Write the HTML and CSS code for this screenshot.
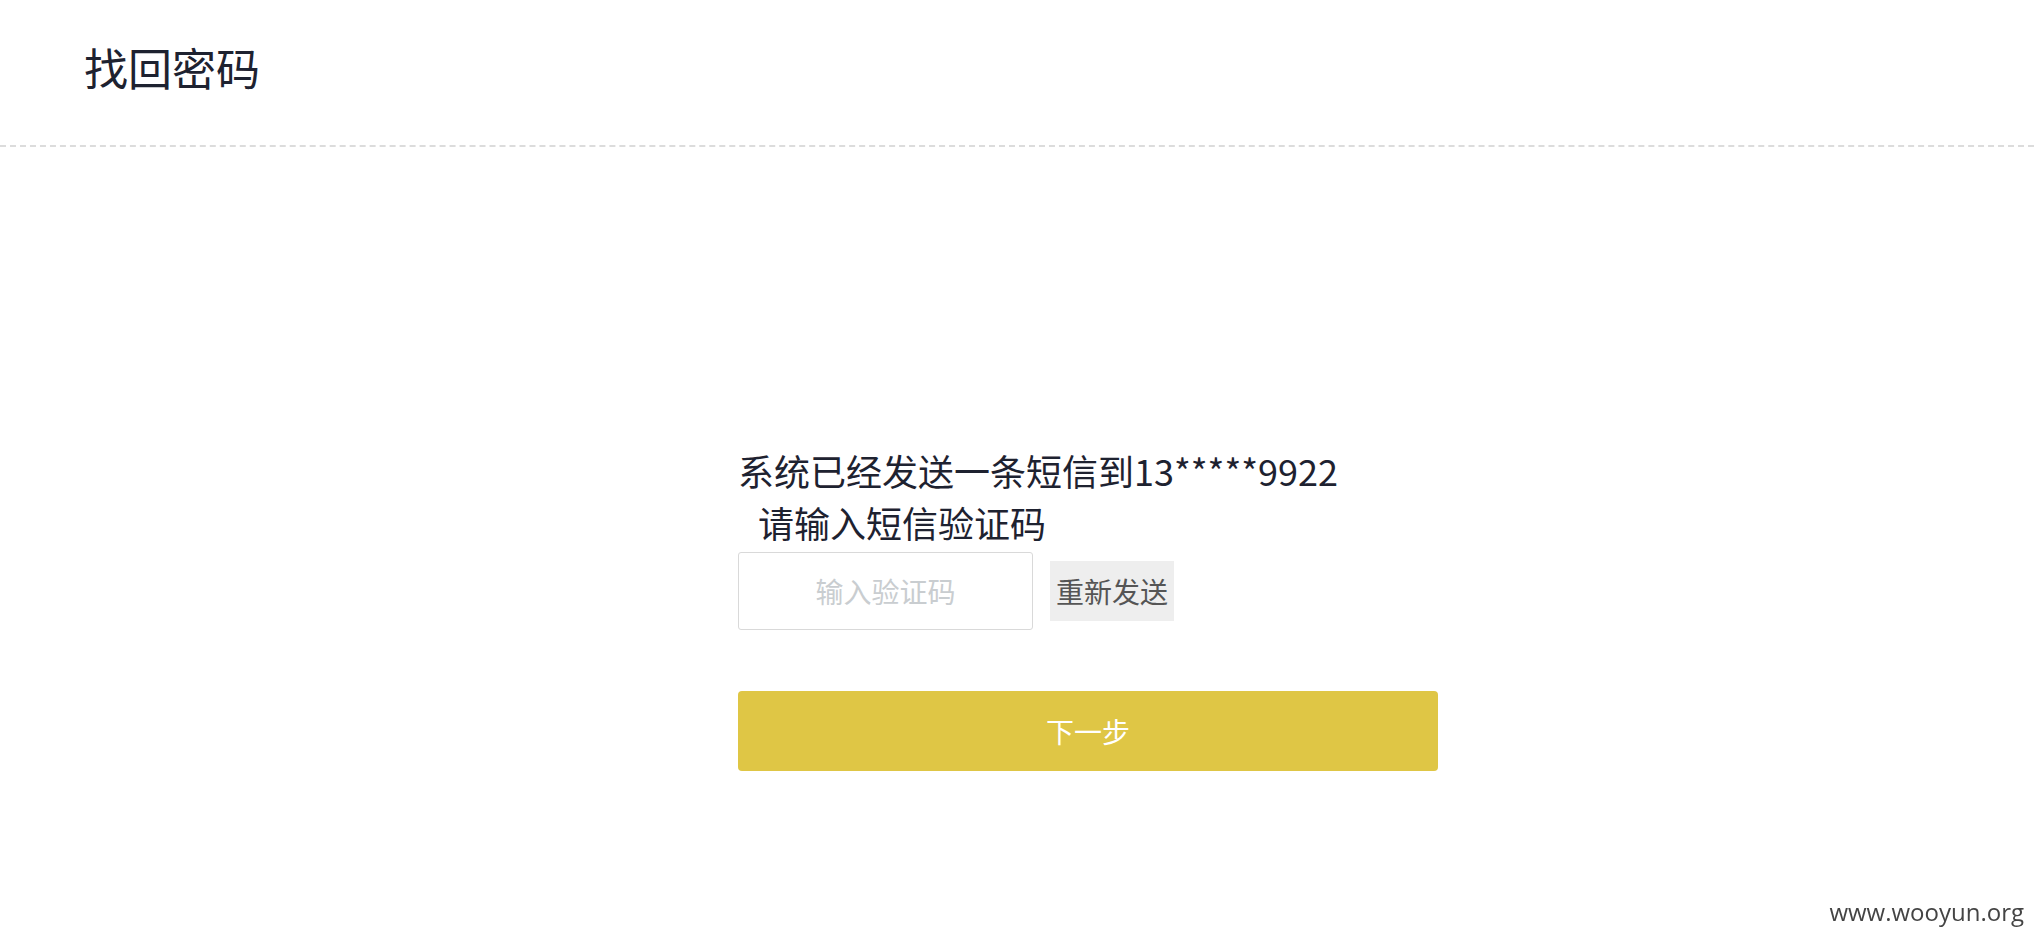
FILE: index.html
```html
<!DOCTYPE html>
<html lang="zh-CN">
<head>
<meta charset="UTF-8">
<meta name="viewport" content="width=device-width, initial-scale=1.0">
<title>找回密码</title>
<link rel="stylesheet" href="styles.css">
</head>
<body>
<div class="header">
    <h1>找回密码</h1>
</div>
<div class="panel">
    <p class="tip">系统已经发送一条短信到13*****9922</p>
    <p class="tip indent">请输入短信验证码</p>
    <div class="code-row">
        <input type="text" class="code-input" placeholder="输入验证码">
        <button class="resend">重新发送</button>
    </div>
    <button class="next">下一步</button>
</div>
<div class="watermark">www.wooyun.org</div>
</body>
</html>
```

FILE: styles.css
```css
body {
    margin: 0;
    padding: 0;
    background-color: #fff;
    font-family: "Noto Sans CJK SC", "Noto Sans", sans-serif;
    color: #1e2230;
}
.header {
    height: 147px;
    padding-left: 84px;
    box-sizing: border-box;
    border-bottom: 2px dashed #dcdcdc;
}
.header h1 {
    margin: 0;
    padding-top: 42px;
    font-size: 44px;
    font-weight: normal;
    line-height: 50px;
}
.panel {
    width: 700px;
    margin-left: calc(50% - 279px);
    padding-top: 297px;
}
.tip {
    margin: 0;
    font-size: 36px;
    line-height: 52px;
}
.indent {
    padding-left: 20px;
}
.code-row {
    display: flex;
    align-items: center;
    gap: 17px;
    margin-top: 4px;
}
.code-input {
    width: 295px;
    height: 78px;
    box-sizing: border-box;
    border: 1px solid #d9d9d9;
    border-radius: 3px;
    font-family: inherit;
    font-size: 28px;
    text-align: center;
    outline: none;
}
.code-input::placeholder {
    color: #c9cdd0;
}
.resend {
    height: 60px;
    padding: 0 6px;
    border: none;
    background-color: #eeeeee;
    color: #555;
    font-family: inherit;
    font-size: 28px;
    cursor: pointer;
}
.next {
    display: block;
    width: 700px;
    height: 80px;
    margin-top: 61px;
    border: none;
    border-radius: 4px;
    background-color: #dfc645;
    color: #fff;
    font-family: inherit;
    font-size: 28px;
    cursor: pointer;
}
.watermark {
    position: fixed;
    right: 10px;
    bottom: 14px;
    font-family: "Open Sans", sans-serif;
    font-size: 24px;
    color: #444;
}
```
